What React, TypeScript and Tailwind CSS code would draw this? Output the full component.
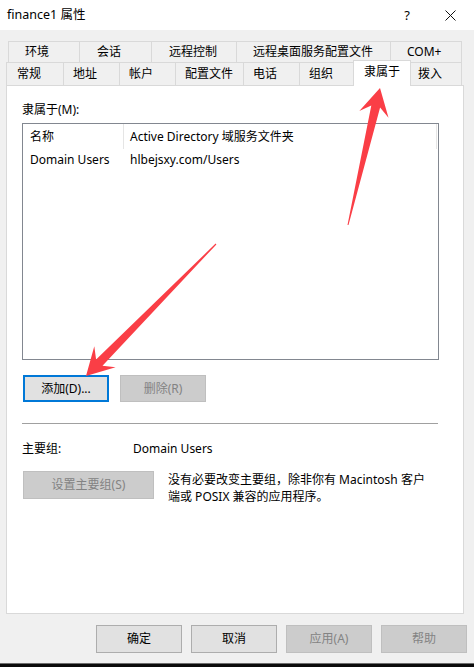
import { FC } from "react";

type Tab = { label: string; w: string; pl: string; active?: boolean };

const row1: Tab[] = [
  { label: "环境", w: "w-[71px]", pl: "pl-[16px]" },
  { label: "会话", w: "w-[72px]", pl: "pl-[17px]" },
  { label: "远程控制", w: "w-[85px]", pl: "pl-[17px]" },
  { label: "远程桌面服务配置文件", w: "w-[154px]", pl: "pl-[16px]" },
  { label: "COM+", w: "w-[72px]", pl: "pl-[16px]" },
];

const row2: Tab[] = [
  { label: "常规", w: "w-[57px]", pl: "pl-[10px]" },
  { label: "地址", w: "w-[56px]", pl: "pl-[9px]" },
  { label: "帐户", w: "w-[56px]", pl: "pl-[9px]" },
  { label: "配置文件", w: "w-[68px]", pl: "pl-[9px]" },
  { label: "电话", w: "w-[56px]", pl: "pl-[9px]" },
  { label: "组织", w: "w-[54px]", pl: "pl-[9px]" },
  { label: "隶属于", w: "w-[58px]", pl: "pl-[10px]", active: true },
  { label: "拨入", w: "w-[51px]", pl: "pl-[7px]" },
];

// polygon for a tapered red annotation arrow
function arrow(x1: number, y1: number, x2: number, y2: number) {
  const dx = x2 - x1;
  const dy = y2 - y1;
  const len = Math.hypot(dx, dy);
  const ux = dx / len;
  const uy = dy / len;
  const nx = -uy;
  const ny = ux;
  const headLen = 27;
  const headW = 30;
  const neckW = 9;
  const tailW = 1;
  const bx = x2 - ux * headLen;
  const by = y2 - uy * headLen;
  const kx = x2 - ux * headLen * 0.7;
  const ky = y2 - uy * headLen * 0.7;
  const p = (x: number, y: number, s: number) =>
    `${(x + nx * s).toFixed(1)},${(y + ny * s).toFixed(1)}`;
  return [
    p(x1, y1, tailW / 2),
    p(kx, ky, neckW / 2),
    p(bx, by, headW / 2),
    `${x2},${y2}`,
    p(bx, by, -headW / 2),
    p(kx, ky, -neckW / 2),
    p(x1, y1, -tailW / 2),
  ].join(" ");
}

const Btn: FC<{ label: string; w: string; disabled?: boolean; focus?: boolean; h?: string }> = ({
  label,
  w,
  disabled,
  focus,
  h = "h-[27px]",
}) => (
  <div
    className={
      disabled
        ? `${w} ${h} flex items-center justify-center border border-[#bfbfbf] bg-[#cccccc] text-[#838383]`
        : focus
          ? `${w} ${h} flex items-center justify-center border-2 border-[#0078d7] bg-[#e1e1e1] text-black`
          : `${w} ${h} flex items-center justify-center border border-[#adadad] bg-[#e1e1e1] text-black`
    }
  >
    {label}
  </div>
);

const App: FC = () => {
  return (
    <div className="relative w-[474px] h-[667px] overflow-hidden bg-[#f0f0f0] flex flex-col text-[12px] leading-[16px] text-black font-[family-name:'Noto_Sans','Noto_Sans_CJK_SC',sans-serif]">
      {/* title bar */}
      <div className="h-[30px] bg-white flex items-center shrink-0">
        <span className="ml-[7px] text-[12.5px]">finance1 属性</span>
        <span className="ml-auto text-[13px] mr-[35px]">?</span>
        <svg width="11" height="11" viewBox="0 0 11 11" className="mr-[18px]">
          <path d="M0.5 0.5 L10.5 10.5 M10.5 0.5 L0.5 10.5" stroke="#111" strokeWidth="1" />
        </svg>
      </div>

      {/* tabs */}
      <div className="mt-[11px] ml-[8px] flex h-[21px]">
        {row1.map((t, i) => (
          <div
            key={t.label}
            className={`${t.w} ${t.pl} flex items-center border-t border-l border-[#d9d9d9] ${i === row1.length - 1 ? "border-r" : ""}`}
          >
            {t.label}
          </div>
        ))}
      </div>
      <div className="ml-[6px] flex items-end h-[23px]">
        {row2.map((t, i) =>
          t.active ? (
            <div
              key={t.label}
              className={`${t.w} ${t.pl} relative z-10 -mb-px h-[26px] pb-[4px] flex items-center bg-white border-t border-l border-r border-[#d9d9d9]`}
            >
              {t.label}
            </div>
          ) : (
            <div
              key={t.label}
              className={`${t.w} ${t.pl} h-[23px] flex items-center border-t border-[#d9d9d9] ${i === 0 || !row2[i - 1].active ? "border-l" : ""} ${i === row2.length - 1 ? "border-r" : ""}`}
            >
              {t.label}
            </div>
          ),
        )}
      </div>

      {/* panel */}
      <div className="ml-[6px] w-[458px] h-[529px] bg-white border border-[#d9d9d9] flex flex-col pl-[15px] shrink-0">
        <div className="mt-[16px]">隶属于(M):</div>
        <div className="mt-[5px] w-[417px] h-[237px] border border-[#828790] flex flex-col">
          <div className="flex h-[25px]">
            <div className="w-[101px] pl-[7px] flex items-center border-r border-[#e5e5e5]">名称</div>
            <div className="w-[313px] pl-[6px] flex items-center border-r border-[#e5e5e5]">
              Active Directory 域服务文件夹
            </div>
          </div>
          <div className="flex h-[22px] items-center">
            <div className="w-[101px] pl-[7px]">Domain Users</div>
            <div className="pl-[6px]">hlbejsxy.com/Users</div>
          </div>
        </div>

        <div className="mt-[15px] ml-px flex gap-[11px]">
          <Btn label="添加(D)..." w="w-[86px]" focus />
          <Btn label="删除(R)" w="w-[86px]" disabled />
        </div>

        <div className="mt-[21px] w-[416px] h-px bg-[#a0a0a0]" />

        <div className="mt-[17px] flex">
          <div className="w-[111px]">主要组:</div>
          <div>Domain Users</div>
        </div>

        <div className="mt-[14px] ml-px flex items-start gap-[14px]">
          <Btn label="设置主要组(S)" w="w-[131px]" h="h-[28px]" disabled />
          <div className="leading-[17px]">
            没有必要改变主要组，除非你有 Macintosh 客户
            <br />
            端或 POSIX 兼容的应用程序。
          </div>
        </div>
      </div>

      {/* dialog buttons */}
      <div className="mt-[11px] flex justify-end gap-[9px] pr-[7px]">
        <Btn label="确定" w="w-[86px]" h="h-[28px]" />
        <Btn label="取消" w="w-[86px]" h="h-[28px]" />
        <Btn label="应用(A)" w="w-[86px]" h="h-[28px]" disabled />
        <Btn label="帮助" w="w-[86px]" h="h-[28px]" disabled />
      </div>

      <div className="flex-1" />
      <div className="h-[4px] bg-[#0a0a0a] border-t border-[#6d6d6d] shrink-0" />

      {/* red annotation arrows */}
      <svg
        className="absolute inset-0 pointer-events-none"
        width="474"
        height="667"
        viewBox="0 0 474 667"
      >
        <polygon points={arrow(348, 225, 380, 88)} fill="#fa3e46" />
        <polygon points={arrow(216, 244, 86, 376)} fill="#fa3e46" />
      </svg>
    </div>
  );
};

export default App;
